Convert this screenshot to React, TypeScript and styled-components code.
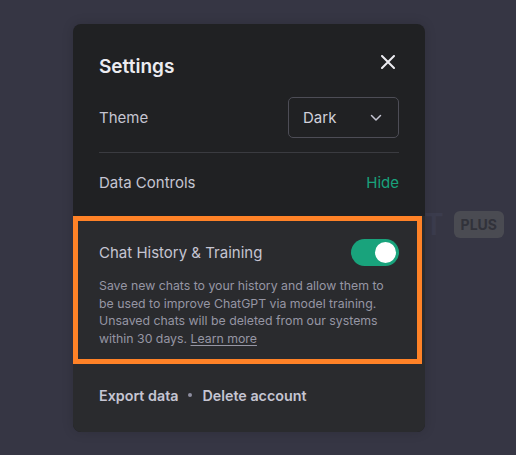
import React, { useState } from 'react';
import styled, { createGlobalStyle } from 'styled-components';

const GlobalStyle = createGlobalStyle`
  html, body {
    margin: 0;
    padding: 0;
    background: #363644;
    font-family: Inter, "Noto Sans", "Liberation Sans", sans-serif;
  }
`;

function App() {
  const [history, setHistory] = useState<boolean>(true);

  return (
    <>
      <GlobalStyle />
      <Page>
        <Behind>
          <Ghost>T</Ghost>
          <PlusBadge>PLUS</PlusBadge>
        </Behind>
        <Dialog>
          <Header>
            <Title>Settings</Title>
            <CloseButton aria-label="Close">
              <svg width="14" height="14" viewBox="0 0 14 14" fill="none">
                <path d="M1 1L13 13M13 1L1 13" stroke="#ececf1" strokeWidth="2" strokeLinecap="round" />
              </svg>
            </CloseButton>
          </Header>
          <Row height={41}>
            <Label>Theme</Label>
            <Select>
              Dark
              <svg width="12" height="8" viewBox="0 0 12 8" fill="none">
                <path d="M1.5 1.5L6 6L10.5 1.5" stroke="#c5c5d2" strokeWidth="1.5" strokeLinecap="round" strokeLinejoin="round" />
              </svg>
            </Select>
          </Row>
          <Divider />
          <Row height={63} bottom={5}>
            <Label>Data Controls</Label>
            <Link>Hide</Link>
          </Row>
          <Lower>
            <Highlight>
              <Row height={40}>
                <Label>Chat History &amp; Training</Label>
                <Switch on={history} onClick={() => setHistory((v) => !v)}>
                  <Knob on={history} />
                </Switch>
              </Row>
              <Description>
                Save new chats to your history and allow them to be used to improve ChatGPT via model training.
                Unsaved chats will be deleted from our systems within 30 days. <LearnMore>Learn more</LearnMore>
              </Description>
            </Highlight>
            <Footer>
              <FooterLink>Export data</FooterLink>
              <Dot />
              <FooterLink>Delete account</FooterLink>
            </Footer>
          </Lower>
        </Dialog>
      </Page>
    </>
  );
}

export default App;

const Page = styled.div`
  position: relative;
  width: 516px;
  height: 455px;
  padding: 24px 0 0 73px;
  box-sizing: border-box;
  background: #363644;
  overflow: hidden;
`;

const Behind = styled.div`
  position: absolute;
  top: 210px;
  left: 424px;
  display: flex;
  align-items: center;
  gap: 10px;
`;

const Ghost = styled.span`
  font-size: 30px;
  font-weight: 600;
  color: #3b3c4d;
  line-height: 28px;
`;

const PlusBadge = styled.span`
  display: flex;
  align-items: center;
  justify-content: center;
  width: 50px;
  height: 27px;
  border-radius: 6px;
  background: #4a4b52;
  color: #31323a;
  font-size: 14px;
  font-weight: 700;
`;

const Dialog = styled.div`
  position: relative;
  width: 352px;
  height: 408px;
  border-radius: 8px;
  background: #202123;
  display: flex;
  flex-direction: column;
  overflow: hidden;
  box-shadow: 0 0 12px rgba(0, 0, 0, 0.15);
`;

const Header = styled.div`
  display: flex;
  align-items: center;
  justify-content: space-between;
  height: 73px;
  padding: 11px 30px 0 26px;
  box-sizing: border-box;
`;

const Title = styled.h2`
  margin: 0;
  font-size: 19px;
  font-weight: 600;
  color: #ececf1;
`;

const CloseButton = styled.button`
  display: flex;
  padding: 0;
  margin-bottom: 8px;
  border: none;
  background: none;
  cursor: pointer;
`;

const Row = styled.div<{ height: number; bottom?: number }>`
  display: flex;
  align-items: center;
  justify-content: space-between;
  height: ${({ height }) => height}px;
  box-sizing: border-box;
  padding: 0 26px ${({ bottom }) => bottom ?? 0}px;
`;

const Label = styled.span`
  font-size: 15px;
  color: #c5c5d2;
`;

const Select = styled.div`
  display: flex;
  align-items: center;
  justify-content: space-between;
  width: 111px;
  height: 41px;
  box-sizing: border-box;
  padding: 0 16px 0 14px;
  border: 1px solid #4d4d56;
  border-radius: 5px;
  font-size: 15px;
  color: #d1d1db;
`;

const Divider = styled.hr`
  margin: 14px 26px 0;
  border: none;
  border-top: 1px solid #3a3b40;
`;

const Link = styled.span`
  font-size: 15px;
  color: #19a37c;
`;

const Lower = styled.div`
  flex: 1;
  display: flex;
  flex-direction: column;
  background: #2a2b2e;
`;

const Highlight = styled.div`
  width: 349px;
  height: 148px;
  box-sizing: border-box;
  border: 5px solid #ff8227;
  padding: 11px 0 0;
  & > ${Row} {
    padding: 0 18px 0 21px;
  }
`;

const Switch = styled.button<{ on: boolean }>`
  position: relative;
  width: 48px;
  height: 27px;
  padding: 0;
  border: none;
  border-radius: 14px;
  background: ${({ on }) => (on ? '#19a37c' : '#565869')};
  cursor: pointer;
`;

const Knob = styled.span<{ on: boolean }>`
  position: absolute;
  top: 3px;
  left: ${({ on }) => (on ? '24px' : '3px')};
  width: 21px;
  height: 21px;
  border-radius: 50%;
  background: #ffffff;
`;

const Description = styled.p`
  margin: 5px 18px 0 21px;
  font-size: 12.3px;
  line-height: 17.7px;
  color: #9696a4;
`;

const LearnMore = styled.a`
  color: inherit;
  text-decoration: underline;
  text-underline-offset: 2px;
`;

const Footer = styled.div`
  display: flex;
  align-items: center;
  gap: 10px;
  padding: 0 26px;
  height: 62px;
`;

const FooterLink = styled.span`
  font-size: 14.3px;
  font-weight: 600;
  color: #c5c5d2;
`;

const Dot = styled.span`
  width: 4px;
  height: 4px;
  border-radius: 50%;
  background: #8e8ea0;
`;
